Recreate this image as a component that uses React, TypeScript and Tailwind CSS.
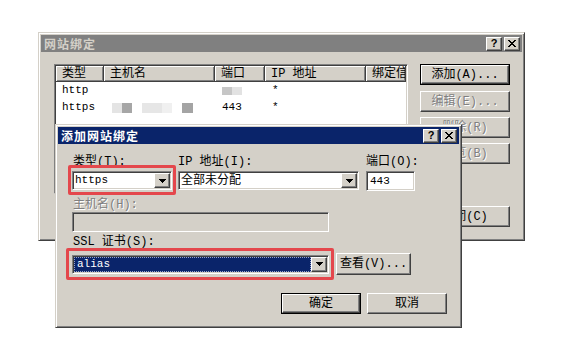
import React from "react";

// classic 3D edges
const raised =
  "border border-t-white border-l-white border-b-[#404040] border-r-[#404040] shadow-[inset_-1px_-1px_0_#808080]";
const sunken =
  "border border-t-[#808080] border-l-[#808080] border-b-white border-r-white shadow-[inset_1px_1px_0_#404040,inset_-1px_-1px_0_#d4d0c8]";
const frame =
  "border border-t-[#d4d0c8] border-l-[#d4d0c8] border-b-[#404040] border-r-[#404040] shadow-[inset_1px_1px_0_#fff,inset_-1px_-1px_0_#808080]";
const grayText = "text-[#808080] [text-shadow:1px_1px_0_#fff]";
const mono = "font-['Liberation_Mono',monospace] text-[11px]";
const label = "whitespace-nowrap leading-[14px]";

function CloseGlyph() {
  return (
    <svg width="8" height="7" viewBox="0 0 8 7" shapeRendering="crispEdges">
      <path
        d="M0 0h2v1H0zM6 0h2v1H6zM1 1h2v1H1zM5 1h2v1H5zM2 2h4v1H2zM3 3h2v1H3zM2 4h4v1H2zM1 5h2v1H1zM5 5h2v1H5zM0 6h2v1H0zM6 6h2v1H6z"
        fill="#000"
      />
    </svg>
  );
}

function DownArrow() {
  return (
    <svg width="7" height="4" viewBox="0 0 7 4" shapeRendering="crispEdges">
      <path d="M0 0h7v1H0zM1 1h5v1H1zM2 2h3v1H2zM3 3h1v1H3z" fill="#000" />
    </svg>
  );
}

function TitleBar({ title, active }: { title: string; active?: boolean }) {
  return (
    <div
      className={`flex h-[17px] items-center justify-between pl-[3px] pr-[2px] ${
        active ? "bg-[#0a246a] text-white" : "bg-[#808080] text-[#d4d0c8]"
      }`}
    >
      <span className="font-['Noto_Sans_CJK_SC',sans-serif] text-[12px] font-bold leading-none tracking-[1px]">
        {title}
      </span>
      <div className="flex gap-[2px]">
        <div className={`flex h-[14px] w-[16px] items-center justify-center bg-[#d4d0c8] ${raised}`}>
          <span className="font-['Liberation_Sans',sans-serif] text-[11px] font-bold leading-none text-black">
            ?
          </span>
        </div>
        <div className={`flex h-[14px] w-[16px] items-center justify-center bg-[#d4d0c8] ${raised}`}>
          <CloseGlyph />
        </div>
      </div>
    </div>
  );
}

function Button({
  children,
  isDefault,
  disabled,
  className = "",
}: {
  children: React.ReactNode;
  isDefault?: boolean;
  disabled?: boolean;
  className?: string;
}) {
  const inner = (
    <div
      className={`flex h-full w-full items-center justify-center whitespace-nowrap bg-[#d4d0c8] leading-none ${raised} ${
        disabled ? grayText : "text-black"
      }`}
    >
      {children}
    </div>
  );
  if (isDefault) {
    return <div className={`border border-black ${className}`}>{inner}</div>;
  }
  return <div className={className}>{inner}</div>;
}

function Combo({
  className,
  children,
}: {
  className: string;
  children: React.ReactNode;
}) {
  return (
    <div className={`flex h-[19px] bg-white p-[1px] ${sunken} ${className}`}>
      <div className="flex min-w-0 flex-1 items-center bg-white">{children}</div>
      <div className={`flex w-[16px] items-center justify-center bg-[#d4d0c8] ${raised}`}>
        <DownArrow />
      </div>
    </div>
  );
}

const cols = ["w-[48px]", "w-[111px]", "w-[50px]", "w-[101px]", "flex-1"];
const headers = ["类型", "主机名", "端口", "IP 地址", "绑定信息"];

function SiteBindings() {
  return (
    <div className={`absolute left-[38px] top-[32px] flex h-[209px] w-[487px] flex-col bg-[#d4d0c8] p-[2px] ${frame}`}>
      <TitleBar title="网站绑定" />
      <div className="flex gap-[12px] pl-[13px] pt-[12px]">
        <div className={`h-[130px] w-[354px] overflow-hidden bg-white p-[1px] ${sunken}`}>
          <div className="flex h-[16px]">
            {headers.map((h, i) => (
              <div
                key={h}
                className={`${cols[i]} flex items-center overflow-hidden whitespace-nowrap border-b border-r border-[#404040] bg-[#d4d0c8] pl-[6px] leading-none shadow-[inset_1px_1px_0_#fff,inset_-1px_-1px_0_#808080]`}
              >
                {h}
              </div>
            ))}
          </div>
          <div className="flex h-[17px] items-center">
            <div className={`${cols[0]} pl-[6px] ${mono}`}>http</div>
            <div className={cols[1]} />
            <div className={`${cols[2]} flex pl-[7px]`}>
              <div className="h-[8px] w-[10px] bg-[#c6c6c6]" />
              <div className="h-[8px] w-[10px] bg-[#e2e2e2]" />
            </div>
            <div className={`${cols[3]} pl-[7px] ${mono}`}>*</div>
          </div>
          <div className="flex h-[17px] items-center">
            <div className={`${cols[0]} pl-[6px] ${mono}`}>https</div>
            <div className={`${cols[1]} flex pl-[8px]`}>
              <div className="h-[10px] w-[10px] bg-[#e4e4e4]" />
              <div className="h-[10px] w-[10px] bg-[#a6a6a6]" />
              <div className="ml-[10px] h-[10px] w-[20px] bg-[#e6e6e6]" />
              <div className="h-[10px] w-[10px] bg-[#f0f0f0]" />
              <div className="ml-[10px] h-[10px] w-[11px] bg-[#a4a4a4]" />
            </div>
            <div className={`${cols[2]} pl-[7px] ${mono}`}>443</div>
            <div className={`${cols[3]} pl-[7px] ${mono}`}>*</div>
          </div>
        </div>
        <div className="flex w-[90px] flex-col">
          <Button isDefault className="h-[21px]">添加(A)...</Button>
          <Button disabled className="mt-[6px] h-[21px]">编辑(E)...</Button>
          <Button disabled className="mt-[5px] h-[21px]">删除(R)</Button>
          <Button disabled className="mt-[5px] h-[21px]">浏览(B)</Button>
          <Button className="mt-[42px] h-[21px]">关闭(C)</Button>
        </div>
      </div>
    </div>
  );
}

function AddBinding() {
  return (
    <div className={`absolute left-[55px] top-[124px] flex h-[204px] w-[407px] flex-col bg-[#d4d0c8] p-[2px] ${frame}`}>
      <TitleBar title="添加网站绑定" active />
      <div className="flex flex-col pl-[14px] pr-[12px] pt-[11px]">
        <div className="flex items-start">
          <div className="flex w-[100px] flex-col gap-[2px]">
            <span className={`pl-[1px] ${label}`}>类型(T):</span>
            <Combo className="w-[100px]">
              <span className={`pl-[1px] ${mono}`}>https</span>
            </Combo>
          </div>
          <div className="ml-[6px] flex w-[181px] flex-col gap-[2px]">
            <span className={label}>IP 地址(I):</span>
            <Combo className="w-[181px]">
              <span className="pl-[1px] leading-none">全部未分配</span>
            </Combo>
          </div>
          <div className="ml-[7px] flex w-[49px] flex-col gap-[2px]">
            <span className={label}>端口(O):</span>
            <div className={`flex h-[20px] items-center bg-white pl-[3px] ${sunken} ${mono}`}>443</div>
          </div>
        </div>
        <span className={`mt-[7px] pl-[1px] ${label} ${grayText}`}>主机名(H):</span>
        <div className={`h-[20px] w-[257px] bg-[#d4d0c8] ${sunken}`} />
        <span className={`mt-[3px] pl-[1px] ${label}`}>SSL 证书(S):</span>
        <div className="mt-[4px] flex h-[22px] items-center gap-[7px]">
          <div className={`flex h-[19px] w-[257px] bg-white p-[1px] ${sunken}`}>
            <div className="flex min-w-0 flex-1 items-center border border-dotted border-[#9aa3c8] bg-[#0a246a] pl-[2px]">
              <span className={`text-white ${mono}`}>alias</span>
            </div>
            <div className={`flex w-[16px] items-center justify-center bg-[#d4d0c8] ${raised}`}>
              <DownArrow />
            </div>
          </div>
          <Button className="h-[22px] w-[75px]">查看(V)...</Button>
        </div>
        <div className="mt-[18px] flex justify-end gap-[6px]">
          <Button isDefault className="h-[21px] w-[80px]">确定</Button>
          <Button className="h-[21px] w-[80px]">取消</Button>
        </div>
      </div>
    </div>
  );
}

export default function App() {
  return (
    <div className="relative h-[355px] w-[571px] overflow-hidden bg-white font-['Liberation_Mono','Noto_Sans_CJK_SC',monospace] text-[12px] text-black">
      <SiteBindings />
      <AddBinding />
      {/* red highlight annotations */}
      <div className="absolute left-[68px] top-[165px] h-[30px] w-[108px] rounded-[2px] border-[3px] border-[#e4474c]" />
      <div className="absolute left-[66px] top-[248px] h-[32px] w-[268px] rounded-[2px] border-[3px] border-[#e4474c]" />
    </div>
  );
}
